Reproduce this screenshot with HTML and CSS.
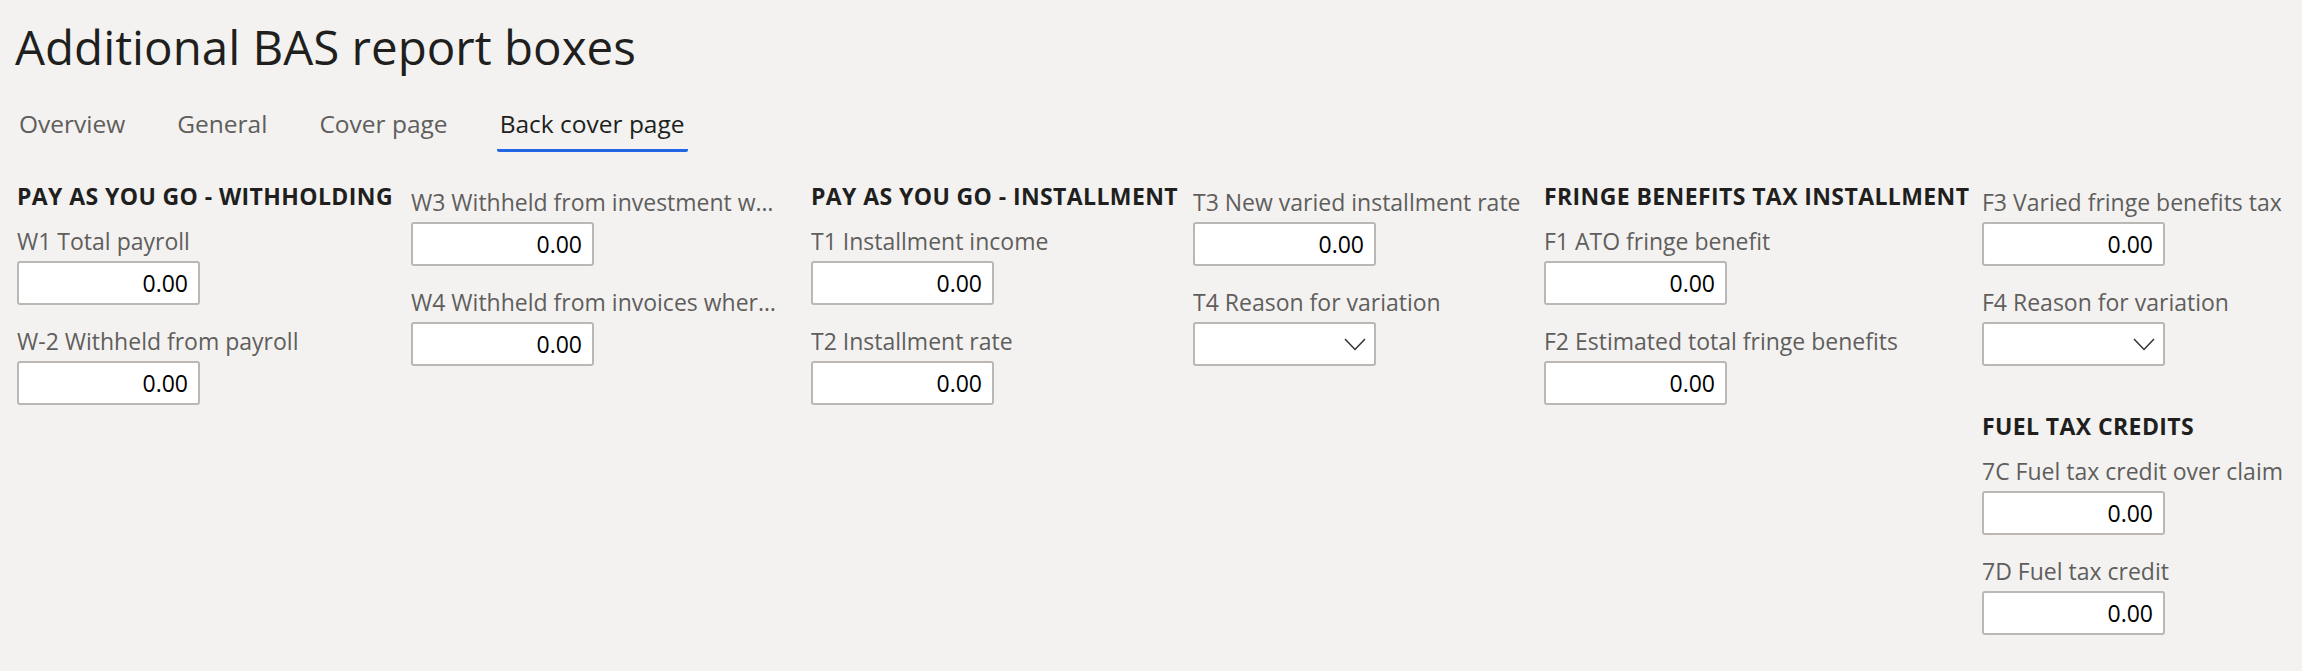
FILE: index.html
```html
<!DOCTYPE html>
<html lang="en">
<head>
<meta charset="utf-8">
<title>Additional BAS report boxes</title>
<link rel="stylesheet" href="styles.css">
</head>
<body>
<div class="page">
  <h1 class="title">Additional BAS report boxes</h1>
  <nav class="tabs">
    <span class="tab">Overview</span>
    <span class="tab">General</span>
    <span class="tab">Cover page</span>
    <span class="tab active">Back cover page</span>
  </nav>
  <div class="sections">
    <div class="col c1">
      <h2 class="group-head">PAY AS YOU GO - WITHHOLDING</h2>
      <div class="field"><label class="field-label">W1 Total payroll</label><input class="num" type="text" value="0.00"></div>
      <div class="field"><label class="field-label">W-2 Withheld from payroll</label><input class="num" type="text" value="0.00"></div>
    </div>
    <div class="col c2 sub">
      <div class="field"><label class="field-label" title="W3 Withheld from investment where TFN not quoted">W3 Withheld from investment w…</label><input class="num" type="text" value="0.00"></div>
      <div class="field"><label class="field-label" title="W4 Withheld from invoices where ABN not quoted">W4 Withheld from invoices wher…</label><input class="num" type="text" value="0.00"></div>
    </div>
    <div class="col c3">
      <h2 class="group-head">PAY AS YOU GO - INSTALLMENT</h2>
      <div class="field"><label class="field-label">T1 Installment income</label><input class="num" type="text" value="0.00"></div>
      <div class="field"><label class="field-label">T2 Installment rate</label><input class="num" type="text" value="0.00"></div>
    </div>
    <div class="col c4 sub">
      <div class="field"><label class="field-label">T3 New varied installment rate</label><input class="num" type="text" value="0.00"></div>
      <div class="field"><label class="field-label">T4 Reason for variation</label>
        <div class="select"><svg class="chev" width="22" height="13" viewBox="0 0 22 13"><polyline points="1,1 11,11.5 21,1" fill="none" stroke="#323130" stroke-width="1.5"/></svg></div>
      </div>
    </div>
    <div class="col c5">
      <h2 class="group-head">FRINGE BENEFITS TAX INSTALLMENT</h2>
      <div class="field"><label class="field-label">F1 ATO fringe benefit</label><input class="num" type="text" value="0.00"></div>
      <div class="field"><label class="field-label">F2 Estimated total fringe benefits</label><input class="num" type="text" value="0.00"></div>
    </div>
    <div class="col c6 sub">
      <div class="field"><label class="field-label">F3 Varied fringe benefits tax</label><input class="num" type="text" value="0.00"></div>
      <div class="field"><label class="field-label">F4 Reason for variation</label>
        <div class="select"><svg class="chev" width="22" height="13" viewBox="0 0 22 13"><polyline points="1,1 11,11.5 21,1" fill="none" stroke="#323130" stroke-width="1.5"/></svg></div>
      </div>
      <h2 class="group-head fuel">FUEL TAX CREDITS</h2>
      <div class="field"><label class="field-label">7C Fuel tax credit over claim</label><input class="num" type="text" value="0.00"></div>
      <div class="field"><label class="field-label">7D Fuel tax credit</label><input class="num" type="text" value="0.00"></div>
    </div>
  </div>
</div>
</body>
</html>
```

FILE: styles.css
```css
html, body {
  margin: 0;
  background: #f3f2f1;
}

body {
  font-family: "Segoe UI", "Open Sans", "Noto Sans", sans-serif;
  color: #201f1e;
}

.page {
  padding: 15px 0 0 15px;
}

.title {
  margin: 0;
  font-size: 47.5px;
  line-height: 64px;
  font-weight: 400;
  color: #201f1e;
}

.tabs {
  display: flex;
  gap: 46px;
  margin-top: 29px;
  padding-left: 1px;
}

.tab {
  font-size: 24.5px;
  line-height: 32px;
  padding: 0 3px 9px;
  border-bottom: 3px solid transparent;
  border-radius: 0 0 2px 2px;
  color: #605e5c;
  white-space: nowrap;
}

.tab.active {
  color: #201f1e;
  border-bottom-color: #2266e3;
}

.sections {
  display: grid;
  grid-template-columns: 394px 400px 382px 351px 438px 1fr;
  margin-top: 29px;
  padding-left: 2px;
}

.col {
  display: flex;
  flex-direction: column;
  align-items: flex-start;
  min-width: 0;
}

.col.sub {
  padding-top: 5px;
}

.c2 {
  padding-right: 20px;
}

.group-head {
  margin: 0 0 14px;
  font-size: 23px;
  line-height: 30px;
  letter-spacing: 0.4px;
  font-weight: 700;
  white-space: nowrap;
  color: #201f1e;
}

.group-head.fuel {
  margin-top: 25px;
}

.field {
  display: flex;
  flex-direction: column;
  align-items: flex-start;
  margin-bottom: 20px;
  max-width: 100%;
}

.field-label {
  display: block;
  max-width: 100%;
  font-size: 23px;
  line-height: 32px;
  color: #605e5c;
  white-space: nowrap;
  overflow: hidden;
  text-overflow: ellipsis;
  margin-bottom: 4px;
}

.num {
  box-sizing: border-box;
  display: block;
  width: 183px;
  height: 44px;
  margin: 0;
  padding: 0 10px;
  border: 2px solid #bab7b4;
  border-radius: 3px;
  background: #fff;
  text-align: right;
  font-family: "Segoe UI", "Open Sans", "Noto Sans", sans-serif;
  font-size: 23px;
  color: #000;
  outline: none;
}

.select {
  box-sizing: border-box;
  display: flex;
  align-items: center;
  justify-content: flex-end;
  width: 183px;
  height: 44px;
  padding-right: 8px;
  border: 2px solid #bab7b4;
  border-radius: 3px;
  background: #fff;
}

.chev {
  display: block;
}
```
